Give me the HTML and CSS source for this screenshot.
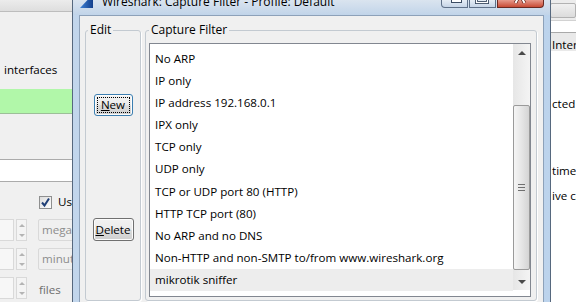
FILE: index.html
```html
<!DOCTYPE html>
<html lang="en">
<head>
  <meta charset="UTF-8">
  <title>Capture Filter</title>
  <link rel="stylesheet" href="styles.css">
</head>
<body>

  <!-- Capture Options window behind -->
  <div class="desk">
    <div class="app-main">
      <div class="app-band"></div>
      <div class="iface-label">interfaces</div>
      <div class="filter-field"></div>
      <div class="text-field"></div>

      <div class="check-row">
        <span class="checkbox">
          <svg width="11" height="11" viewBox="0 0 11 11"><path d="M2 5.5 L4.5 8.5 L9 1.5" fill="none" stroke="#1f3f76" stroke-width="2"/></svg>
        </span>
        <span class="check-text">Use multiple files</span>
      </div>

      <div class="spin-row">
        <span class="spin-input"></span>
        <span class="spinner"><i class="arr-up"></i><i class="arr-down"></i></span>
        <span class="combo">megabyte(s)</span>
      </div>
      <div class="spin-row">
        <span class="spin-input"></span>
        <span class="spinner"><i class="arr-up"></i><i class="arr-down"></i></span>
        <span class="combo">minute(s)</span>
      </div>
      <div class="spin-row">
        <span class="spin-input"></span>
        <span class="spinner"><i class="arr-up"></i><i class="arr-down"></i></span>
        <span class="spin-label">files</span>
      </div>
    </div>

    <div class="app-side">
      <div class="side-band"><span class="side-btn"></span></div>
      <div class="side-head">Interface</div>
      <div class="side-body">
        <div class="side-line first">cted Interface</div>
        <div class="side-line gap-a">time</div>
        <div class="side-line gap-b">ive capture</div>
      </div>
    </div>
  </div>

  <!-- Capture Filter dialog -->
  <div class="dialog">
    <div class="titlebar">
      <svg class="win-icon" width="14" height="8" viewBox="0 0 14 8">
        <defs>
          <linearGradient id="fin" x1="0" y1="0" x2="1" y2="0">
            <stop offset="0" stop-color="#3f82d6"/>
            <stop offset="1" stop-color="#123f8c"/>
          </linearGradient>
        </defs>
        <path d="M7.5 0 L13 0 L13 8 L0 8 Z" fill="url(#fin)"/>
      </svg>
      <span class="title">Wireshark: Capture Filter - Profile: Default</span>
      <div class="caption-btns">
        <span class="cap-btn cap-min">
          <svg width="27" height="8" viewBox="0 0 27 8"><rect x="10.5" y="-2" width="10" height="4.5" fill="#fff" stroke="#3b4c63"/></svg>
        </span>
        <span class="cap-btn cap-max">
          <svg width="27" height="8" viewBox="0 0 27 8"><rect x="7.5" y="-6" width="11" height="8.5" fill="none" stroke="#3b4c63" stroke-width="3"/><rect x="7.5" y="-6" width="11" height="8.5" fill="none" stroke="#fff" stroke-width="1.2"/></svg>
        </span>
        <span class="cap-btn cap-close">
          <svg width="46" height="8" viewBox="0 0 46 8"><path d="M22 -4 L18.5 3 M24 -4 L27.5 3" stroke="#5b1d14" stroke-width="3.4"/><path d="M22 -4 L18.5 3 M24 -4 L27.5 3" stroke="#fff" stroke-width="2"/></svg>
        </span>
      </div>
    </div>

    <div class="client">
      <fieldset class="group edit-group">
        <legend>Edit</legend>
        <button class="btn btn-new"><u>N</u>ew</button>
        <button class="btn btn-delete"><u>D</u>elete</button>
      </fieldset>

      <fieldset class="group filter-group">
        <legend>Capture Filter</legend>
        <div class="listbox">
          <ul class="items">
            <li>No ARP</li>
            <li>IP only</li>
            <li>IP address 192.168.0.1</li>
            <li>IPX only</li>
            <li>TCP only</li>
            <li>UDP only</li>
            <li>TCP or UDP port 80 (HTTP)</li>
            <li>HTTP TCP port (80)</li>
            <li>No ARP and no DNS</li>
            <li>Non-HTTP and non-SMTP to/from www.wireshark.org</li>
            <li class="selected">mikrotik sniffer</li>
          </ul>
          <div class="scrollbar">
            <div class="sb-arrow"><i class="arr-up dark"></i></div>
            <div class="sb-track">
              <div class="sb-thumb"><span class="grip"></span></div>
            </div>
            <div class="sb-arrow"><i class="arr-down dark"></i></div>
          </div>
        </div>
      </fieldset>
    </div>
  </div>

</body>
</html>
```

FILE: styles.css
```css
html, body {
  margin: 0;
  padding: 0;
  height: 100%;
  overflow: hidden;
  font-family: "Open Sans", "Liberation Sans", sans-serif;
  font-size: 12px;
  color: #000;
}

body {
  position: relative;
  background: #f0f0f0;
}

/* Window behind */
.desk {
  display: flex;
  height: 302px;
}

.app-main {
  width: 548px;
  flex: none;
  overflow: hidden;
}

.app-band {
  height: 11px;
  background: linear-gradient(#ececec, #dedede);
  border-bottom: 1px solid #bdbdbd;
}

.iface-label {
  margin-top: 50px;
  padding-left: 4px;
  line-height: 16px;
  font-size: 11.6px;
  white-space: nowrap;
}

.filter-field {
  margin-top: 11px;
  height: 24px;
  background: #b1f7a9;
  border-bottom: 1px solid #9cbf98;
}

.text-field {
  margin-top: 45px;
  height: 21px;
  background: #fff;
  border-top: 1px solid #ababab;
  border-bottom: 1px solid #ababab;
}

.check-row {
  display: flex;
  align-items: center;
  margin: 13px 0 0 39px;
  height: 14px;
}

.checkbox {
  width: 11px;
  height: 11px;
  border: 1px solid #8e8f8f;
  background: linear-gradient(135deg, #dcdcdc, #fdfdfd);
  display: flex;
  align-items: center;
  justify-content: center;
}

.check-text {
  margin-left: 6px;
  line-height: 16px;
  font-size: 11.6px;
  white-space: nowrap;
}

.spin-row {
  display: flex;
  align-items: center;
  height: 22px;
  margin-top: 7px;
}

.check-row + .spin-row {
  margin-top: 10px;
}

.spin-input {
  width: 20px;
  height: 20px;
  margin-left: -8px;
  border: 1px solid #d9d9d9;
  background: #f7f7f7;
}

.spinner {
  width: 9px;
  height: 20px;
  margin-left: 2px;
  border: 1px solid #d9d9d9;
  display: flex;
  flex-direction: column;
  align-items: center;
  justify-content: space-around;
  background: #f4f4f4;
}

.combo {
  margin-left: 11px;
  width: 80px;
  height: 22px;
  box-sizing: border-box;
  border: 1px solid #d9d9d9;
  border-radius: 2px;
  padding-left: 3px;
  line-height: 20px;
  font-size: 11.6px;
  color: #8d8d8d;
  white-space: nowrap;
}

.spin-label {
  margin-left: 12px;
  color: #6d6d6d;
  font-size: 11.6px;
  line-height: 22px;
  padding-top: 4px;
}

.arr-up, .arr-down {
  display: block;
  width: 0;
  height: 0;
  border-left: 3px solid transparent;
  border-right: 3px solid transparent;
}

.arr-up { border-bottom: 3px solid #b4b4b4; }
.arr-down { border-top: 3px solid #b4b4b4; }
.arr-up.dark { border-bottom-color: #4a4a4a; border-left-width: 4px; border-right-width: 4px; border-bottom-width: 4px; }
.arr-down.dark { border-top-color: #4a4a4a; border-left-width: 4px; border-right-width: 4px; border-top-width: 4px; }

.app-side {
  flex: 1;
  background: #fff;
  overflow: hidden;
  white-space: nowrap;
  font-size: 11.6px;
}

.side-band {
  height: 20px;
  background: #ececec;
  border-bottom: 1px solid #d2d2d2;
  display: flex;
  align-items: flex-end;
}

.side-btn {
  width: 24px;
  height: 13px;
  margin: 0 0 2px 2px;
  border: 1px solid #b2b2b2;
  border-radius: 2px;
  background: linear-gradient(#f0f0f0, #dcdcdc);
}

.side-head {
  margin-top: 11px;
  height: 19px;
  padding: 4px 0 0 4px;
  box-sizing: border-box;
  line-height: 16px;
  background: #e9e9e9;
  border-top: 1px solid #a9a9a9;
}

.side-line {
  padding-left: 4px;
  line-height: 16px;
}

.side-line.first { margin-top: 45px; }
.side-line.gap-a { margin-top: 51px; }
.side-line.gap-b { margin-top: 9px; }

/* Dialog on top */
.dialog {
  position: absolute;
  left: 72px;
  top: 0;
  width: 479px;
  height: 320px;
  box-sizing: border-box;
  display: flex;
  flex-direction: column;
  border-left: 1px solid #56687e;
  border-right: 1px solid #56687e;
  background: linear-gradient(to right, #c2d6ec, #aecaea 40%, #bcd3ec);
}

.titlebar {
  height: 15px;
  flex: none;
  display: flex;
  align-items: flex-start;
  background: linear-gradient(#dae4ef, #c1d4e9);
}

.win-icon {
  margin-left: 7px;
  flex: none;
}

.title {
  flex: 1;
  margin: -6px 0 0 8px;
  line-height: 16px;
  white-space: nowrap;
}

.caption-btns {
  display: flex;
  gap: 1px;
  margin-right: 6px;
}

.cap-btn {
  display: block;
  height: 8px;
  box-sizing: border-box;
  border: 1px solid #5f7189;
  border-top: none;
  overflow: hidden;
}

.cap-btn svg { display: block; margin-left: -1px; }

.cap-min {
  width: 27px;
  border-radius: 0 0 0 4px;
  background: linear-gradient(#e6edf5, #c6d5e7);
}

.cap-max {
  width: 27px;
  background: linear-gradient(#e6edf5, #c6d5e7);
}

.cap-close {
  width: 47px;
  border-color: #6b2a22;
  border-radius: 0 0 4px 0;
  background: linear-gradient(#e79a8c, #c84b35);
}

.client {
  flex: 1;
  margin: 0 6px;
  display: flex;
  gap: 4px;
  padding: 7px 6px 0 5px;
  background: #f0f0f0;
  border: 1px solid #8da1b9;
  border-bottom: none;
}

.group {
  margin: 0;
  padding: 0;
  height: 278px;
  box-sizing: border-box;
  border: 1px solid #c3cad1;
  border-radius: 3px;
  box-shadow: 1px 1px 0 #fff;
}

.group legend {
  padding: 0 2px;
  line-height: 14px;
}

.edit-group {
  width: 56px;
  flex: none;
  display: flex;
  flex-direction: column;
  align-items: center;
}

.edit-group legend { margin-left: 2px; }

.filter-group {
  flex: 1;
  min-width: 0;
  padding: 0 5px 0 3px;
}

.filter-group legend { margin-left: 0; }

.btn {
  font: inherit;
  font-size: 11.6px;
  color: #000;
  padding: 0;
  border: 1px solid #707070;
  border-radius: 3px;
  background: linear-gradient(#f2f2f2 0%, #ebebeb 50%, #dddddd 51%, #cfcfcf 100%);
  box-shadow: inset 0 0 0 1px #fcfcfc;
  line-height: 18px;
}

.btn-new {
  margin-top: 57px;
  width: 39px;
  height: 22px;
  border-color: #3c7fb1;
  outline: 1px dotted #000;
  outline-offset: -4px;
}

.btn-delete {
  margin-top: 102px;
  width: 41px;
  height: 23px;
}

.listbox {
  margin-top: 6px;
  height: 254px;
  box-sizing: border-box;
  display: flex;
  align-items: flex-start;
  background: #fff;
  border: 1px solid #828790;
}

.items {
  flex: 1;
  list-style: none;
  margin: 0;
  padding: 4px 0 0;
  font-size: 11.6px;
}

.items li {
  line-height: 22.1px;
  padding-left: 5px;
  white-space: nowrap;
}

.items li.selected {
  background: #ededed;
}

.scrollbar {
  width: 17px;
  height: 246px;
  flex: none;
  display: flex;
  flex-direction: column;
  background: linear-gradient(to right, #e6e6e6, #f4f4f4);
}

.sb-arrow {
  height: 17px;
  display: flex;
  align-items: center;
  justify-content: center;
}

.sb-track {
  flex: 1;
}

.sb-thumb {
  margin: 44px 0 0 0;
  height: 165px;
  box-sizing: border-box;
  border: 1px solid #9a9a9a;
  border-radius: 2px;
  background: linear-gradient(to right, #f5f5f5, #e6e6e6 50%, #d4d4d4);
  display: flex;
  align-items: center;
  justify-content: center;
}

.grip {
  width: 7px;
  height: 5px;
  border-top: 1px solid #6f6f6f;
  border-bottom: 1px solid #6f6f6f;
  background: linear-gradient(transparent 2px, #6f6f6f 2px, #6f6f6f 3px, transparent 3px);
}
```
